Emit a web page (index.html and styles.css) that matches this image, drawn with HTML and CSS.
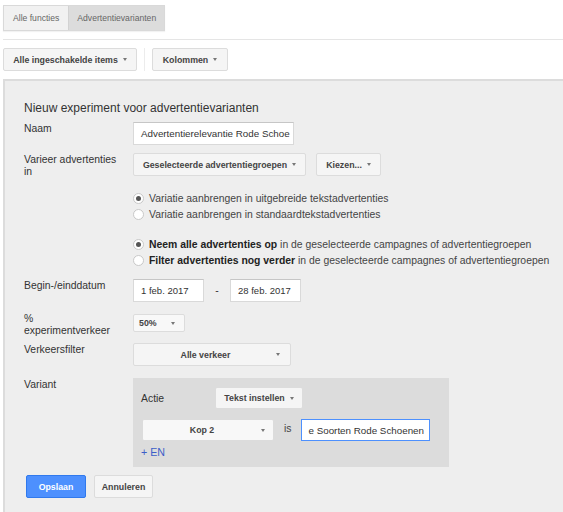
FILE: index.html
```html
<!DOCTYPE html>
<html>
<head>
<meta charset="utf-8">
<link rel="stylesheet" href="styles.css">
</head>
<body>
<div class="tabs"><span class="tab">Alle functies</span><span class="tab tab-active">Advertentievarianten</span></div>
<div class="divider"></div>
<div class="toolbar">
  <button class="btn tb-btn1">Alle ingeschakelde items<span class="caret"></span></button>
  <span class="tb-sep"></span>
  <button class="btn tb-btn2">Kolommen<span class="caret"></span></button>
</div>
<div class="panel">
  <div class="title">Nieuw experiment voor advertentievarianten</div>

  <div class="row row-naam">
    <div class="label">Naam</div>
    <div class="field"><div class="input input-name">Advertentierelevantie Rode Schoe</div></div>
  </div>

  <div class="row row-varieer">
    <div class="label">Varieer advertenties<br>in</div>
    <div class="field">
      <button class="btn btn-groups">Geselecteerde advertentiegroepen<span class="caret"></span></button>
      <button class="btn btn-kiezen">Kiezen...<span class="caret"></span></button>
    </div>
  </div>

  <div class="row radios radios-1">
    <div></div>
    <div>
      <div class="radio-line"><span class="radio"><span class="dot"></span></span>Variatie aanbrengen in uitgebreide tekstadvertenties</div>
      <div class="radio-line"><span class="radio"></span>Variatie aanbrengen in standaardtekstadvertenties</div>
    </div>
  </div>

  <div class="row radios radios-2">
    <div></div>
    <div>
      <div class="radio-line"><span class="radio"><span class="dot"></span></span><b>Neem alle advertenties op</b>&nbsp;in de geselecteerde campagnes of advertentiegroepen</div>
      <div class="radio-line"><span class="radio"></span><b>Filter advertenties nog verder</b>&nbsp;in de geselecteerde campagnes of advertentiegroepen</div>
    </div>
  </div>

  <div class="row row-date">
    <div class="label">Begin-/einddatum</div>
    <div class="field field-date">
      <div class="input input-date">1 feb. 2017</div>
      <span class="dash">-</span>
      <div class="input input-date">28 feb. 2017</div>
    </div>
  </div>

  <div class="row row-pct">
    <div class="label">%<br>experimentverkeer</div>
    <div class="field"><button class="btn select-pct"><span class="txt-left">50%</span><span class="caret"></span></button></div>
  </div>

  <div class="row row-verkeer">
    <div class="label">Verkeersfilter</div>
    <div class="field"><button class="btn btn-verkeer"><span class="txt">Alle verkeer</span><span class="caret"></span></button></div>
  </div>

  <div class="row row-variant">
    <div class="label">Variant</div>
    <div class="variant-box">
      <div class="v-row1">
        <span class="v-label">Actie</span>
        <button class="btn btn-tekst">Tekst instellen<span class="caret"></span></button>
      </div>
      <div class="v-row2">
        <button class="btn select-kop"><span class="txt">Kop 2</span><span class="caret"></span></button>
        <span class="is">is</span>
        <div class="input input-var">e Soorten Rode Schoenen<span class="text-caret"></span></div>
      </div>
      <div class="add-en">+ EN</div>
    </div>
  </div>

  <div class="actions">
    <button class="btn btn-primary">Opslaan</button>
    <button class="btn btn-cancel">Annuleren</button>
  </div>
</div>
</body>
</html>
```

FILE: styles.css
```css
* { box-sizing: border-box; }
html, body { margin: 0; height: 100%; }
body {
  font-family: "Liberation Sans", Arial, sans-serif;
  color: #333;
  background: #fff;
  overflow: hidden;
}

.tabs {
  display: flex;
  width: max-content;
  margin: 5px 0 0 3px;
  border: 1px solid #d9d9d9;
  box-shadow: 0 1px 1px rgba(0,0,0,0.05);
}
.tab {
  height: 24px;
  line-height: 24px;
  font-size: 8.6px;
  color: #666;
  background: #f1f1f1;
  padding: 0 9px;
}
.tab-active {
  background: #dcdcdc;
  border-left: 1px solid #d2d2d2;
  padding: 0 8px;
}

.divider {
  margin: 8px 0 0 3px;
  height: 1px;
  background: #e5e5e5;
}

.toolbar {
  display: flex;
  height: 23px;
  margin: 8px 0 0 3px;
}
.tb-sep {
  width: 1px;
  background: #ececec;
  margin: 0 7px;
}
.tb-btn1 { width: 134px; }
.tb-btn2 { width: 76px; }

.btn {
  font-family: inherit;
  font-weight: bold;
  font-size: 8.8px;
  color: #444;
  background: #f5f5f5;
  border: 1px solid #dcdcdc;
  border-radius: 2px;
  height: 23px;
  padding: 0 8px;
  display: inline-flex;
  align-items: center;
  justify-content: center;
  white-space: nowrap;
}
.caret {
  display: inline-block;
  width: 0;
  height: 0;
  border-left: 2.5px solid transparent;
  border-right: 2.5px solid transparent;
  border-top: 3px solid #777;
  margin-left: 5px;
}

.panel {
  margin: 8px 0 0 3px;
  border-left: 2px solid #dcdcdc;
  border-top: 2px solid #dcdcdc;
  background: #eeeeee;
  height: 433px;
  padding: 20px 0 0 19px;
}
.title {
  font-size: 12px;
  line-height: 14px;
  color: #333;
}

.row {
  display: grid;
  grid-template-columns: 109px 1fr;
  align-items: start;
}
.label {
  font-size: 10.4px;
  line-height: 12px;
  padding: 1px 6px 0 0;
  color: #333;
}
.field {
  display: flex;
  align-items: flex-start;
  gap: 10px;
}

.input {
  background: #fff;
  border: 1px solid #d9d9d9;
  border-top-color: #c6c6c6;
  height: 23px;
  font-size: 9.8px;
  color: #333;
  padding: 0 7px;
  display: flex;
  align-items: center;
  white-space: nowrap;
  overflow: hidden;
}

.row-naam { margin-top: 7px; }
.input-name { width: 161px; padding-right: 1px; }

.row-varieer { margin-top: 8px; }
.btn-groups { width: 173px; }
.btn-kiezen { width: 65px; }

.radios-1 { margin-top: 12px; }
.radios-2 { margin-top: 14px; }
.radio-line {
  display: flex;
  align-items: center;
  height: 16px;
  font-size: 10.4px;
  color: #444;
  white-space: nowrap;
}
.radio-line b { color: #222; }
.radio {
  width: 11px;
  height: 11px;
  border-radius: 50%;
  background: #fff;
  border: 1px solid #c8c8c8;
  margin-right: 5px;
  display: flex;
  align-items: center;
  justify-content: center;
  flex: none;
}
.dot {
  width: 5px;
  height: 5px;
  border-radius: 50%;
  background: #555;
}

.row-date { margin-top: 11px; }
.field-date { gap: 0; }
.input-date { width: 71px; font-size: 9.5px; }
.dash {
  width: 26px;
  text-align: center;
  font-size: 10.4px;
  line-height: 23px;
}

.row-pct { margin-top: 10px; }
.select-pct {
  width: 52px;
  height: 18px;
  margin-top: 2px;
  background: #f8f8f8;
  justify-content: space-between;
  padding: 0 9px 0 5px;
}

.row-verkeer { margin-top: 6px; }
.btn-verkeer {
  width: 158px;
  padding: 0 10px 0 6px;
}
.txt { flex: 1; text-align: center; }

.row-variant { margin-top: 12px; }
.variant-box {
  width: 316px;
  background: #dcdcdc;
  padding: 9px 8px 8px 8px;
}
.v-row1 { display: flex; align-items: center; }
.v-label { width: 74px; font-size: 10.4px; color: #333; }
.btn-tekst { width: 88px; height: 22px; }
.v-row2 { display: flex; align-items: flex-start; margin-top: 10px; }
.select-kop {
  width: 132px;
  height: 22px;
  margin-left: 1px;
  background: #f8f8f8;
  padding: 0 8px 0 5px;
}
.is {
  font-size: 10.4px;
  color: #444;
  margin: 0 9px 0 10px;
  padding-top: 4px;
}
.input-var {
  width: 129px;
  height: 22px;
  font-size: 9.8px;
  border: 1px solid #4d90fe;
}
.text-caret {
  display: inline-block;
  width: 1px;
  height: 12px;
  background: #222;
  margin-left: 1px;
}
.add-en {
  margin-top: 5px;
  font-size: 10.7px;
  line-height: 13px;
  color: #3c5ec8;
}

.actions {
  display: flex;
  gap: 8px;
  margin: 8px 0 0 2px;
}
.btn-primary {
  width: 60px;
  background: #4d90fe;
  border-color: #3079ed;
  color: #fff;
}
.btn-cancel {
  width: 59px;
}
```
